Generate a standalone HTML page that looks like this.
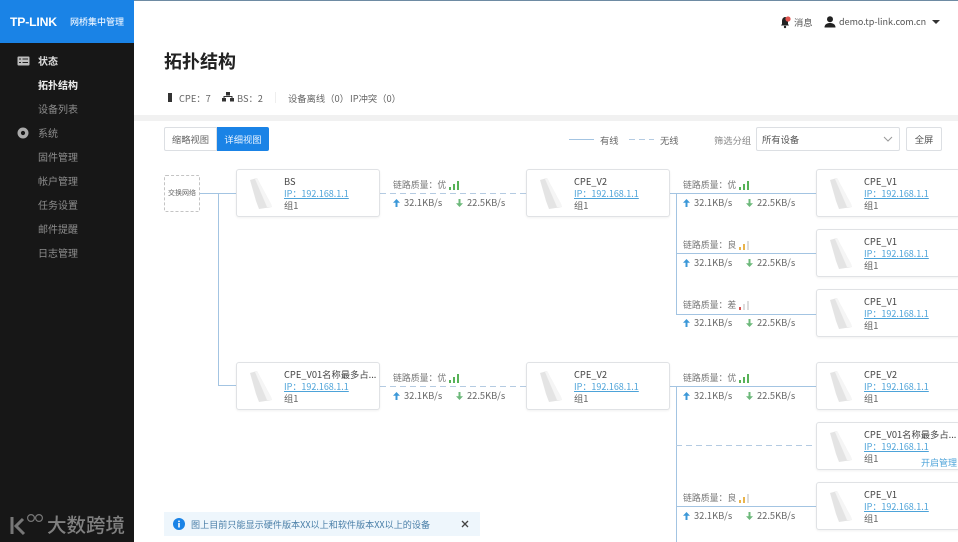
<!DOCTYPE html>
<html lang="zh"><head><meta charset="utf-8"><title>拓扑结构</title>
<style>
*{box-sizing:border-box;margin:0;padding:0}
html,body{width:958px;height:542px;overflow:hidden;background:#fff}
body{position:relative;font-family:"Noto Sans CJK SC","Liberation Sans",sans-serif;color:#555;font-size:9.3px;filter:blur(.35px)}
.a{position:absolute;white-space:nowrap;line-height:14px}
#side{position:absolute;left:0;top:0;width:134px;height:542px;background:#171717}
#logo{position:absolute;left:0;top:0;width:134px;height:43px;background:#1a83e6}
.m{position:absolute;left:38px;font-size:10px;line-height:14px;color:#8d8d8d;white-space:nowrap}
.m.on{color:#f0f0f0;font-weight:700}
.card{position:absolute;width:144px;height:48px;background:#fff;border:1px solid #e0e2e5;border-radius:3px;box-shadow:0 1px 2px rgba(0,0,0,.06)}
.card svg{position:absolute;left:13px;top:8px}
.card b{position:absolute;left:47px;top:5px;font-weight:400;color:#444;line-height:13px;white-space:nowrap}
.card u{position:absolute;left:47px;top:17px;color:#4da3d9;line-height:13px;white-space:nowrap;font-size:9px}
.card i{position:absolute;left:47px;top:29px;font-style:normal;color:#666;line-height:13px}
.ln{position:absolute;background:#a3c4e2}
.h1{height:1.4px}.v1{width:1.4px}
.d{position:absolute;height:1px;background:repeating-linear-gradient(90deg,#b4cbe2 0 6px,transparent 6px 10px)}
.q{position:absolute;color:#777;white-space:nowrap;line-height:13px;font-size:8.9px}
.q s{text-decoration:none;position:absolute;left:56px;top:3px;width:11px;height:9px}
.q s span{position:absolute;bottom:0;width:2.400px}
.sp{position:absolute;white-space:nowrap;color:#666;line-height:13px;font-size:9.300px;width:130px;height:13px}
.sp svg{position:absolute;top:3px}
.sp .t1{position:absolute;left:11px;top:0}
.sp .t2{position:absolute;left:74px;top:0}
</style></head><body>
<svg width="0" height="0" style="position:absolute"><defs>
<symbol id="dev" viewBox="0 0 24 32"><path d="M0 2l7-2 14 26 1 3-13 2-3-8z" fill="#e4e4e4"/><path d="M5 1l2-1 14 26 1 3-5 0z" fill="#f5f5f5"/></symbol>
<symbol id="up" viewBox="0 0 7 8"><path d="M3.500 0L7 3.800H4.500V8h-2V3.800H0z" fill="#3c98d8"/></symbol>
<symbol id="dn" viewBox="0 0 7 8"><path d="M3.500 8L7 4.200H4.500V0h-2v4.200H0z" fill="#6cb87a"/></symbol>
</defs></svg>
<div id="side"></div>
<div id="logo"></div>
<div class="a" style="left:10px;top:14px;font-family:'Liberation Sans',sans-serif;font-size:12px;line-height:16px;color:#fff;font-weight:700;letter-spacing:-.2px;transform:scaleX(1.02);transform-origin:left">TP-LINK</div>
<div class="a" style="left:70px;top:15px;font-size:9px;color:#e6f2ff;font-weight:500">网桥集中管理</div>
<svg class="a" style="left:17px;top:56px" width="13" height="10"><rect x=".5" y=".5" width="12" height="9" rx="1" fill="#bdbdbd"/><path d="M2 3h2M2 6.500h2M5.500 3h5.500M5.500 6.500h5.500" stroke="#222" stroke-width="1"/></svg>
<div class="m on" style="top:54px;color:#ddd">状态</div>
<div class="m on" style="top:78px">拓扑结构</div>
<div class="m" style="top:102px">设备列表</div>
<svg class="a" style="left:17px;top:127px" width="12" height="12"><circle cx="6" cy="6" r="3.800" fill="none" stroke="#aaa" stroke-width="3.400"/></svg>
<div class="m" style="top:126px">系统</div>
<div class="m" style="top:150px">固件管理</div>
<div class="m" style="top:174px">帐户管理</div>
<div class="m" style="top:198px">任务设置</div>
<div class="m" style="top:222px">邮件提醒</div>
<div class="m" style="top:246px">日志管理</div>
<svg class="a" style="left:9px;top:512px" width="36" height="24" fill="none" stroke="#777"><path d="M3 5v17" stroke-width="3"/><path d="M14 7l-7 7 8 8" stroke-width="3"/><circle cx="22" cy="6" r="3.400" stroke-width="1.200"/><circle cx="30" cy="6" r="3.400" stroke-width="1.200"/></svg>
<div class="a" style="left:47px;top:511px;font-size:19.500px;line-height:25px;color:#808080;font-weight:500">大数跨境</div>

<div class="a" style="left:134px;top:0;width:824px;height:1px;background:#6e8ba3"></div>
<svg class="a" style="left:780px;top:15px" width="12" height="14"><path d="M5 2c-2 .3-3 2-3 4v3L1 10.500h8L8 9V6c0-2-1-3.700-3-4z" fill="#222"/><circle cx="5" cy="12" r="1.200" fill="#222"/><circle cx="8" cy="4" r="2.600" fill="#e05550"/></svg>
<div class="a" style="left:794px;top:15px;color:#555">消息</div>
<svg class="a" style="left:824px;top:16px" width="12" height="12"><circle cx="6" cy="3.300" r="3" fill="#222"/><path d="M.5 11.500c0-3.500 3-4.500 5.500-4.500s5.500 1 5.500 4.500z" fill="#222"/></svg>
<div class="a" style="left:839px;top:15px;color:#555;font-size:9px">demo.tp-link.com.cn</div>
<div class="a" style="left:932px;top:20px;width:0;height:0;border:4px solid transparent;border-top:4px solid #333;border-bottom:0"></div>

<div class="a" style="left:164px;top:49px;font-size:18px;line-height:24px;font-weight:700;color:#222">拓扑结构</div>

<div class="a" style="left:168px;top:93px;width:4px;height:9px;background:#333"></div>
<div class="a" style="left:179px;top:91px;color:#666">CPE：7</div>
<svg class="a" style="left:222px;top:92px" width="12" height="10" fill="#333"><rect x="4" y="0" width="4" height="3.500"/><rect x="0" y="6" width="4" height="3.500"/><rect x="8" y="6" width="4" height="3.500"/><path d="M2 6V4.500h8V6" fill="none" stroke="#333"/></svg>
<div class="a" style="left:237px;top:91px;color:#666">BS：2</div>
<div class="a" style="left:275px;top:92px;width:1px;height:11px;background:#eee"></div>
<div class="a" style="left:288px;top:91px;color:#666">设备离线（0）</div>
<div class="a" style="left:350px;top:91px;color:#666">IP冲突（0）</div>

<div class="a" style="left:134px;top:115px;width:824px;height:6px;background:#f1f1f1"></div>

<div class="a" style="left:164px;top:127px;width:53px;height:24px;border:1px solid #dcdfe3;border-radius:2px 0 0 2px;line-height:22px;text-align:center;color:#666">缩略视图</div>
<div class="a" style="left:217px;top:127px;width:52px;height:24px;background:#1a83e6;border-radius:0 2px 2px 0;line-height:24px;text-align:center;color:#e8f3ff">详细视图</div>

<div class="a" style="left:569px;top:139px;width:25px;height:1.400px;background:#a3c4e2"></div>
<div class="a" style="left:600px;top:133px;color:#666">有线</div>
<div class="d" style="left:629px;top:139px;width:25px"></div>
<div class="a" style="left:660px;top:133px;color:#666">无线</div>
<div class="a" style="left:714px;top:133px;color:#888">筛选分组</div>
<div class="a" style="left:756px;top:127px;width:144px;height:24px;border:1px solid #dcdfe3;border-radius:2px;line-height:22px;padding-left:5px;color:#555">所有设备</div>
<svg class="a" style="left:883px;top:136px" width="10" height="7"><path d="M1 1l4 4 4-4" fill="none" stroke="#999"/></svg>
<div class="a" style="left:906px;top:127px;width:36px;height:24px;border:1px solid #dcdfe3;border-radius:2px;line-height:22px;text-align:center;color:#555">全屏</div>

<div class="a" style="left:164px;top:175px;width:36px;height:37px;border:1px dashed #c4c4c4;border-radius:2px;font-size:7px;line-height:35px;text-align:center;color:#666">交换网络</div>

<!-- lines -->
<div class="ln h1" style="left:200px;top:193px;width:36px"></div>
<div class="ln v1" style="left:218px;top:193px;height:192px"></div>
<div class="ln h1" style="left:218px;top:385px;width:18px"></div>
<div class="d" style="left:380px;top:193px;width:146px"></div>
<div class="d" style="left:380px;top:386px;width:146px"></div>
<div class="ln h1" style="left:670px;top:193px;width:146px"></div>
<div class="ln v1" style="left:676px;top:193px;height:121px"></div>
<div class="ln h1" style="left:676px;top:253px;width:140px"></div>
<div class="ln h1" style="left:676px;top:314px;width:140px"></div>
<div class="ln h1" style="left:670px;top:386px;width:146px"></div>
<div class="ln v1" style="left:676px;top:386px;height:156px"></div>
<div class="d" style="left:676px;top:445px;width:140px"></div>
<div class="ln h1" style="left:676px;top:506px;width:140px"></div>

<!-- cards -->
<div class="card" style="left:236px;top:169px"><svg width="24" height="32"><use href="#dev"/></svg><b>BS</b><u>IP：192.168.1.1</u><i>组1</i></div>
<div class="card" style="left:526px;top:169px"><svg width="24" height="32"><use href="#dev"/></svg><b>CPE_V2</b><u>IP：192.168.1.1</u><i>组1</i></div>
<div class="card" style="left:816px;top:169px"><svg width="24" height="32"><use href="#dev"/></svg><b>CPE_V1</b><u>IP：192.168.1.1</u><i>组1</i></div>
<div class="card" style="left:816px;top:229px"><svg width="24" height="32"><use href="#dev"/></svg><b>CPE_V1</b><u>IP：192.168.1.1</u><i>组1</i></div>
<div class="card" style="left:816px;top:289px"><svg width="24" height="32"><use href="#dev"/></svg><b>CPE_V1</b><u>IP：192.168.1.1</u><i>组1</i></div>
<div class="card" style="left:236px;top:362px"><svg width="24" height="32"><use href="#dev"/></svg><b>CPE_V01名称最多占...</b><u>IP：192.168.1.1</u><i>组1</i></div>
<div class="card" style="left:526px;top:362px"><svg width="24" height="32"><use href="#dev"/></svg><b>CPE_V2</b><u>IP：192.168.1.1</u><i>组1</i></div>
<div class="card" style="left:816px;top:362px"><svg width="24" height="32"><use href="#dev"/></svg><b>CPE_V2</b><u>IP：192.168.1.1</u><i>组1</i></div>
<div class="card" style="left:816px;top:422px"><svg width="24" height="32"><use href="#dev"/></svg><b>CPE_V01名称最多占...</b><u>IP：192.168.1.1</u><i>组1</i><u style="left:104px;top:33px;font-size:9px;color:#4da3d9;text-decoration:none">开启管理</u></div>
<div class="card" style="left:816px;top:482px"><svg width="24" height="32"><use href="#dev"/></svg><b>CPE_V1</b><u>IP：192.168.1.1</u><i>组1</i></div>

<!-- link labels -->
<div class="q" style="left:393px;top:178px">链路质量：优<s><span style="left:0;height:3px;background:#57b257"></span><span style="left:4px;height:6px;background:#57b257"></span><span style="left:8px;height:9px;background:#57b257"></span></s></div>
<div class="sp" style="left:393px;top:196px"><svg width="7" height="8" style="left:0"><use href="#up"/></svg><span class="t1">32.1KB/s</span><svg width="7" height="8" style="left:63px"><use href="#dn"/></svg><span class="t2">22.5KB/s</span></div>
<div class="q" style="left:393px;top:371px">链路质量：优<s><span style="left:0;height:3px;background:#57b257"></span><span style="left:4px;height:6px;background:#57b257"></span><span style="left:8px;height:9px;background:#57b257"></span></s></div>
<div class="sp" style="left:393px;top:389px"><svg width="7" height="8" style="left:0"><use href="#up"/></svg><span class="t1">32.1KB/s</span><svg width="7" height="8" style="left:63px"><use href="#dn"/></svg><span class="t2">22.5KB/s</span></div>

<div class="q" style="left:683px;top:178px">链路质量：优<s><span style="left:0;height:3px;background:#57b257"></span><span style="left:4px;height:6px;background:#57b257"></span><span style="left:8px;height:9px;background:#57b257"></span></s></div>
<div class="sp" style="left:683px;top:196px"><svg width="7" height="8" style="left:0"><use href="#up"/></svg><span class="t1">32.1KB/s</span><svg width="7" height="8" style="left:63px"><use href="#dn"/></svg><span class="t2">22.5KB/s</span></div>
<div class="q" style="left:683px;top:238px">链路质量：良<s><span style="left:0;height:3px;background:#e9b44c"></span><span style="left:4px;height:6px;background:#e9b44c"></span><span style="left:8px;height:9px;background:#ddd"></span></s></div>
<div class="sp" style="left:683px;top:256px"><svg width="7" height="8" style="left:0"><use href="#up"/></svg><span class="t1">32.1KB/s</span><svg width="7" height="8" style="left:63px"><use href="#dn"/></svg><span class="t2">22.5KB/s</span></div>
<div class="q" style="left:683px;top:298px">链路质量：差<s><span style="left:0;height:3px;background:#d9534f"></span><span style="left:4px;height:6px;background:#ddd"></span><span style="left:8px;height:9px;background:#ddd"></span></s></div>
<div class="sp" style="left:683px;top:316px"><svg width="7" height="8" style="left:0"><use href="#up"/></svg><span class="t1">32.1KB/s</span><svg width="7" height="8" style="left:63px"><use href="#dn"/></svg><span class="t2">22.5KB/s</span></div>
<div class="q" style="left:683px;top:371px">链路质量：优<s><span style="left:0;height:3px;background:#57b257"></span><span style="left:4px;height:6px;background:#57b257"></span><span style="left:8px;height:9px;background:#57b257"></span></s></div>
<div class="sp" style="left:683px;top:389px"><svg width="7" height="8" style="left:0"><use href="#up"/></svg><span class="t1">32.1KB/s</span><svg width="7" height="8" style="left:63px"><use href="#dn"/></svg><span class="t2">22.5KB/s</span></div>
<div class="q" style="left:683px;top:491px">链路质量：良<s><span style="left:0;height:3px;background:#e9b44c"></span><span style="left:4px;height:6px;background:#e9b44c"></span><span style="left:8px;height:9px;background:#ddd"></span></s></div>
<div class="sp" style="left:683px;top:509px"><svg width="7" height="8" style="left:0"><use href="#up"/></svg><span class="t1">32.1KB/s</span><svg width="7" height="8" style="left:63px"><use href="#dn"/></svg><span class="t2">22.5KB/s</span></div>

<!-- notice -->
<div class="a" style="left:164px;top:512px;width:316px;height:24px;background:#eef6fc"></div>
<svg class="a" style="left:173px;top:518px" width="12" height="12"><circle cx="6" cy="6" r="6" fill="#1a83e6"/><rect x="5.200" y="5" width="1.600" height="4.500" fill="#fff"/><rect x="5.200" y="2.600" width="1.600" height="1.500" fill="#fff"/></svg>
<div class="a" style="left:191px;top:517px;font-size:9.100px;color:#4a7fa8">图上目前只能显示硬件版本XX以上和软件版本XX以上的设备</div>
<svg class="a" style="left:461px;top:520px" width="8" height="8"><path d="M1 1l6 6M7 1l-6 6" stroke="#444" stroke-width="1.300"/></svg>
</body></html>
